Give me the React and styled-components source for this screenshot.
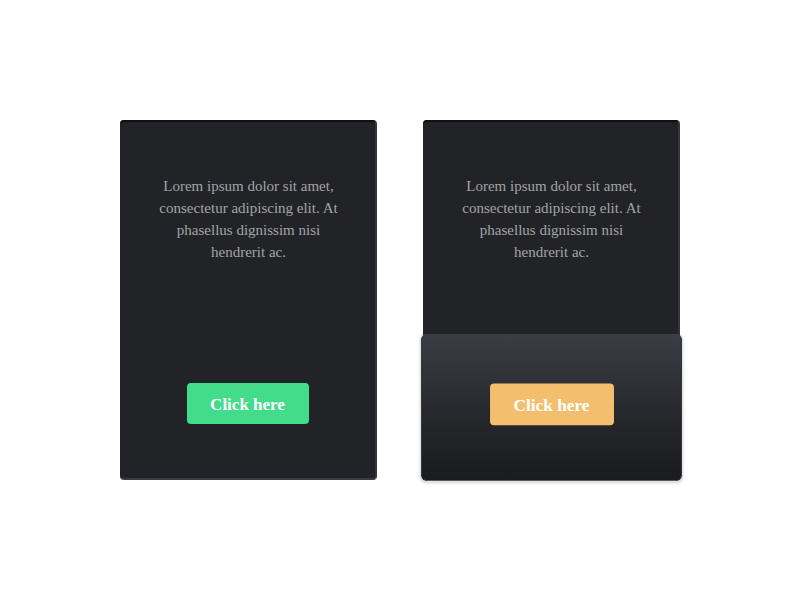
import React from 'react'
import styled, { createGlobalStyle, css } from 'styled-components'

const GlobalStyle = createGlobalStyle`
    html, body {
        margin: 0;
        padding: 0;
        background: #ffffff;
        font-family: "Liberation Serif", "DejaVu Serif", serif;
    }
`

// --------- layout -----------
const Page = styled.div`
    height: 600px;
    display: flex;
    justify-content: center;
    align-items: center;
    gap: 46px;
`

// --------- card -----------
const Card = styled.div`
    width: 257px;
    height: 360px;
    box-sizing: border-box;
    display: flex;
    flex-direction: column;
    background: #222327;
    border-radius: 4px;
    border-right: 2px solid #35363b;
    border-bottom: 2px solid #3b3c41;
    box-shadow: inset 0 3px 1px -1px #0f1012;
`
const Body = styled.div`
    flex: 1;
    padding: 55px 30px 0 32px;
`
const Text = styled.p`
    margin: 0;
    text-align: center;
    font-size: 15px;
    line-height: 22px;
    color: #a3a4a8;
`
const Footer = styled.div`
    height: 145px;
    box-sizing: border-box;
    display: flex;
    justify-content: center;
    align-items: flex-start;
    padding-top: 50px;
    border-radius: 6px;
    ${(p) => p.$active && css`
        margin: 0 -2px -2px 0;
        padding-top: 48px;
        background: linear-gradient(180deg, #3a3d44 0%, #26282c 55%, #1a1b1e 100%);
        border: 1px solid #2c2e33;
        border-top-color: #43464d;
        box-shadow: 0 1px 3px rgba(0, 0, 0, 0.18);
        transform: scale(1.016);
    `}
`
const Button = styled.button`
    width: 122px;
    height: 41px;
    padding-top: 4px;
    border: none;
    border-radius: 4px;
    background: ${(p) => p.$color};
    color: #ffffff;
    font-family: "Liberation Serif", "DejaVu Serif", serif;
    font-weight: bold;
    font-size: 17px;
    cursor: pointer;
`

const text = 'Lorem ipsum dolor sit amet, consectetur adipiscing elit. At phasellus dignissim nisi hendrerit ac.'

const App = () => {
  return (
    <>
        <GlobalStyle />
        <Page>
            <Card>
                <Body>
                    <Text>{text}</Text>
                </Body>
                <Footer>
                    <Button $color="#43dc8b">Click here</Button>
                </Footer>
            </Card>
            <Card>
                <Body>
                    <Text>{text}</Text>
                </Body>
                <Footer $active>
                    <Button $color="#f3bf6f">Click here</Button>
                </Footer>
            </Card>
        </Page>
    </>
  )
}

export default App
